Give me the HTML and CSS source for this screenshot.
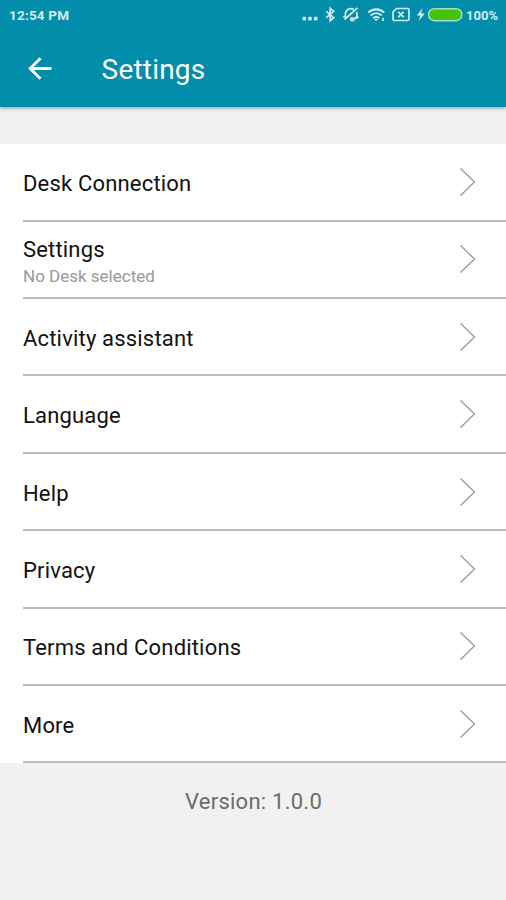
FILE: index.html
```html
<!DOCTYPE html>
<html lang="en">
<head>
<meta charset="utf-8">
<title>Settings</title>
<link rel="stylesheet" href="styles.css">
</head>
<body>
<header class="header">
  <div class="status">
    <span class="time">12:54 PM</span>
    <svg class="status-icons" width="161" height="20" viewBox="302 5 161 20" fill="none" stroke="#d3edf3" stroke-width="1.5">
      <g fill="#d3edf3" stroke="none"><rect x="302.5" y="16.8" width="3.6" height="3.6" rx="1"/><rect x="308.2" y="16.8" width="3.6" height="3.6" rx="1"/><rect x="313.9" y="16.8" width="3.6" height="3.6" rx="1"/></g>
      <path d="M326.3 11.3l7.4 6.4-3.5 3V8.3l3.5 3-7.4 6.4" stroke-width="1.7"/>
      <path d="M345.300 16.500c-.6-4.500 1.500-7.600 5.500-7.800 1.200 0 2.200.3 3 1M356.700 12c.8 2.500.3 4.600-.7 6.300h-6M350 20.300h4.500M344.500 19.500L357.500 7.800M343.200 16.800h3M356 15.500l2.300 2.700" stroke-width="1.800"/>
      <g stroke-width="2.1"><path d="M368.2 12.6c4.7-4.3 11.3-4.3 16 0M370.700 15.500c3.300-3 7.700-3 11 0M373.200 18.100c2-1.500 4-1.500 6 0"/><path d="M374.200 19l2 2.200 2-2.200z" fill="#d3edf3" stroke="none"/></g>
      <path d="M383 17.800v3.200" stroke-width="1.7"/>
      <path d="M396.500 8.500h11q1.500 0 1.500 1.500v9q0 1.500-1.500 1.500h-13q-1.500 0-1.500-1.500v-7zM398.300 11.800l5.400 5.400m0-5.400l-5.400 5.400" stroke-width="1.7"/>
      <path d="M422.500 8l-5.700 7.500h3.500l-1.600 5.500 6-7.600h-3.700z" fill="#d3edf3" stroke="none"/>
      <rect x="428.700" y="8.700" width="33" height="12" rx="5.500" fill="#45c20c" stroke="#a9dccb" stroke-width="1.5"/>
    </svg>
    <span class="percent">100%</span>
  </div>
  <div class="toolbar">
    <svg class="back" width="26" height="24" viewBox="0 0 26 24" fill="none" stroke="#fff" stroke-width="2.9"><path d="M24.500 11.500H3.500M13.500 1.200L3.200 11.500l10.300 10.300"/></svg>
    <h1 class="title">Settings</h1>
  </div>
</header>
<main>
  <ul class="list">
    <li class="row"><span class="label">Desk Connection</span><svg class="chevron" viewBox="0 0 18 30"><path d="M1.500 1.500L15.500 15l-14 13.500"/></svg></li>
    <li class="row"><div class="stack"><span class="label">Settings</span><span class="sub">No Desk selected</span></div><svg class="chevron" viewBox="0 0 18 30"><path d="M1.500 1.500L15.500 15l-14 13.500"/></svg></li>
    <li class="row"><span class="label">Activity assistant</span><svg class="chevron" viewBox="0 0 18 30"><path d="M1.500 1.500L15.500 15l-14 13.500"/></svg></li>
    <li class="row"><span class="label">Language</span><svg class="chevron" viewBox="0 0 18 30"><path d="M1.500 1.500L15.500 15l-14 13.500"/></svg></li>
    <li class="row"><span class="label">Help</span><svg class="chevron" viewBox="0 0 18 30"><path d="M1.500 1.500L15.500 15l-14 13.500"/></svg></li>
    <li class="row"><span class="label">Privacy</span><svg class="chevron" viewBox="0 0 18 30"><path d="M1.500 1.500L15.500 15l-14 13.500"/></svg></li>
    <li class="row"><span class="label">Terms and Conditions</span><svg class="chevron" viewBox="0 0 18 30"><path d="M1.500 1.500L15.500 15l-14 13.500"/></svg></li>
    <li class="row"><span class="label">More</span><svg class="chevron" viewBox="0 0 18 30"><path d="M1.500 1.500L15.500 15l-14 13.500"/></svg></li>
  </ul>
  <p class="version">Version: 1.0.0</p>
</main>
</body>
</html>
```
FILE: styles.css
```css
* { box-sizing: border-box; }
body {
  margin: 0;
  min-height: 900px;
  background: #f1f1f1;
  color: #111;
  font-family: Roboto, "Liberation Sans", sans-serif;
}
.header {
  height: 107px;
  background: #028eab;
  box-shadow: 0 1px 4px rgba(0, 0, 0, .4);
}
.status {
  display: flex;
  align-items: center;
  height: 30px;
  padding: 0 8px 0 9px;
  color: #d3edf3;
  font-size: 13.5px;
  font-weight: 700;
}
.time { letter-spacing: .2px; }
.status-icons { margin-left: auto; }
.percent { width: 32px; margin-left: 3px; font-size: 13px; }
.toolbar {
  display: flex;
  align-items: center;
  height: 77px;
  padding-left: 27px;
}
.title {
  margin: 3px 0 0 48.6px;
  color: #fff;
  font-size: 28px;
  line-height: 34px;
  font-weight: 400;
  letter-spacing: .2px;
}
.list {
  margin: 37px 0 0;
  padding: .4px 0 0 23px;
  list-style: none;
  background: #fff;
}
.row {
  display: flex;
  align-items: center;
  justify-content: space-between;
  height: 77.36px;
  padding-right: 29px;
  border-bottom: 2px solid #bdbdbd;
}
.label {
  padding-top: 4px;
  font-size: 22px;
  line-height: 28px;
  letter-spacing: .18px;
}
.stack {
  display: flex;
  flex-direction: column;
  padding-top: 1.6px;
}
.sub {
  color: #999;
  font-size: 17px;
  line-height: 24px;
}
.chevron {
  width: 18px;
  height: 30px;
  fill: none;
  stroke: #999;
  stroke-width: 1.3;
}
.version {
  margin: 25px 0 0;
  padding-left: 1px;
  color: #6b6b6b;
  font-size: 22px;
  line-height: 28px;
  letter-spacing: .25px;
  text-align: center;
}
```
